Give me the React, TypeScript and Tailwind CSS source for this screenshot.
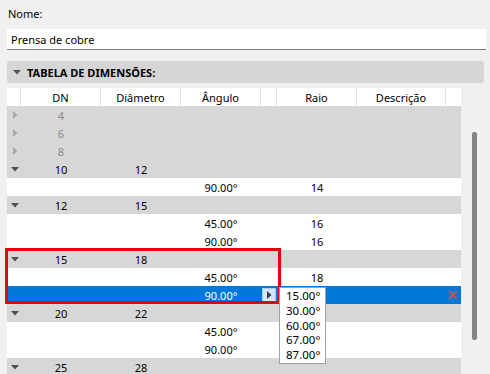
import React from 'react';

type Row =
  | { kind: 'group'; dn: string; diam?: string; disabled?: boolean }
  | { kind: 'child'; angle: string; raio?: string; selected?: boolean };

const rows: Row[] = [
  { kind: 'group', dn: '4', disabled: true },
  { kind: 'group', dn: '6', disabled: true },
  { kind: 'group', dn: '8', disabled: true },
  { kind: 'group', dn: '10', diam: '12' },
  { kind: 'child', angle: '90.00°', raio: '14' },
  { kind: 'group', dn: '12', diam: '15' },
  { kind: 'child', angle: '45.00°', raio: '16' },
  { kind: 'child', angle: '90.00°', raio: '16' },
  { kind: 'group', dn: '15', diam: '18' },
  { kind: 'child', angle: '45.00°', raio: '18' },
  { kind: 'child', angle: '90.00°', selected: true },
  { kind: 'group', dn: '20', diam: '22' },
  { kind: 'child', angle: '45.00°' },
  { kind: 'child', angle: '90.00°' },
  { kind: 'group', dn: '25', diam: '28' },
];

const cols = 'grid grid-cols-[14px_80px_80px_80px_16px_80px_89px_15px]';

function DownTri({ color = '#505050' }: { color?: string }) {
  return (
    <svg width="8" height="5" viewBox="0 0 8 5">
      <path d="M0 0 H8 L4 4.5 Z" fill={color} />
    </svg>
  );
}

function RightTri({ color = '#a8a8a8' }: { color?: string }) {
  return (
    <svg width="5" height="8" viewBox="0 0 5 8">
      <path d="M0 0 V8 L4.5 4 Z" fill={color} />
    </svg>
  );
}

function TableRow({ row }: { row: Row }) {
  if (row.kind === 'group') {
    return (
      <div className={`${cols} h-[18px] bg-[#d7d7d7] items-center text-center`}>
        <div className="flex justify-center pl-[2px]">
          {row.disabled ? <RightTri /> : <DownTri />}
        </div>
        <div className={row.disabled ? 'text-[#8a8a8a]' : 'text-black'}>{row.dn}</div>
        <div>{row.diam}</div>
        <div />
        <div />
        <div />
        <div />
        <div />
      </div>
    );
  }
  return (
    <div
      className={`${cols} h-[18px] items-center text-center ${
        row.selected ? 'bg-[#0078d7] text-white' : 'bg-white text-black'
      }`}
    >
      <div />
      <div />
      <div />
      <div>{row.angle}</div>
      <div className="flex h-full items-center">
        {row.selected && (
          <div className="ml-[1px] flex h-[15px] w-[14px] items-center justify-center border border-[#a6cdee] bg-[#d3e8fa]">
            <RightTri color="#3c3c3c" />
          </div>
        )}
      </div>
      <div>{row.raio}</div>
      <div />
      <div className="flex justify-start pl-[2px]">
        {row.selected && (
          <svg width="10" height="10" viewBox="0 0 10 10">
            <path d="M1 1 L9 9 M9 1 L1 9" stroke="#e8522c" strokeWidth="1.6" />
          </svg>
        )}
      </div>
    </div>
  );
}

export default function App() {
  return (
    <div
      className="relative h-[374px] w-[490px] overflow-hidden bg-[#f0f0f0] text-[11px] leading-none text-black"
      style={{ fontFamily: '"Noto Sans", "Liberation Sans", sans-serif' }}
    >
      {/* Nome */}
      <div className="h-[29px] px-[8px] pt-[8px]">Nome:</div>
      <div className="mx-[7px] mr-[4px] flex h-[21px] items-center border-b border-[#7a7a7a] bg-white pl-[4px]">
        Prensa de cobre
      </div>

      {/* Section header */}
      <div className="mx-[7px] mr-[6px] mt-[11px] flex h-[22px] items-center gap-[6px] rounded-[3px] bg-[#d6d6d6] pl-[6px] font-bold">
        <DownTri color="#555555" />
        <span>TABELA DE DIMENSÕES:</span>
      </div>

      {/* Table */}
      <div className="ml-[7px] mt-[5px] w-[454px]">
        <div className={`${cols} h-[18px] bg-white items-center text-center`}>
          {['', 'DN', 'Diâmetro', 'Ângulo', '', 'Raio', 'Descrição', ''].map((h, i) => (
            <div
              key={i}
              className={`flex h-full items-center justify-center ${i < 7 ? 'border-r border-[#e5e5e5]' : ''}`}
            >
              {h}
            </div>
          ))}
        </div>
        {rows.map((r, i) => (
          <TableRow key={i} row={r} />
        ))}
      </div>

      {/* Scrollbar thumb */}
      <div className="absolute left-[472px] top-[132px] h-[208px] w-[5px] rounded-[2px] bg-[#858585]" />

      {/* Highlight annotation */}
      <div className="pointer-events-none absolute left-[5px] top-[248px] h-[56px] w-[276px] border-[3px] border-[#e3000f]" />

      {/* Dropdown list */}
      <div className="absolute left-[279px] top-[287px] flex h-[77px] w-[47px] flex-col border border-[#a0a0a0] bg-white pl-[6px] pt-[1px] text-[11.5px]">
        {['15.00°', '30.00°', '60.00°', '67.00°', '87.00°'].map((v) => (
          <div key={v} className="h-[14.8px] leading-[14px]">
            {v}
          </div>
        ))}
      </div>
    </div>
  );
}
